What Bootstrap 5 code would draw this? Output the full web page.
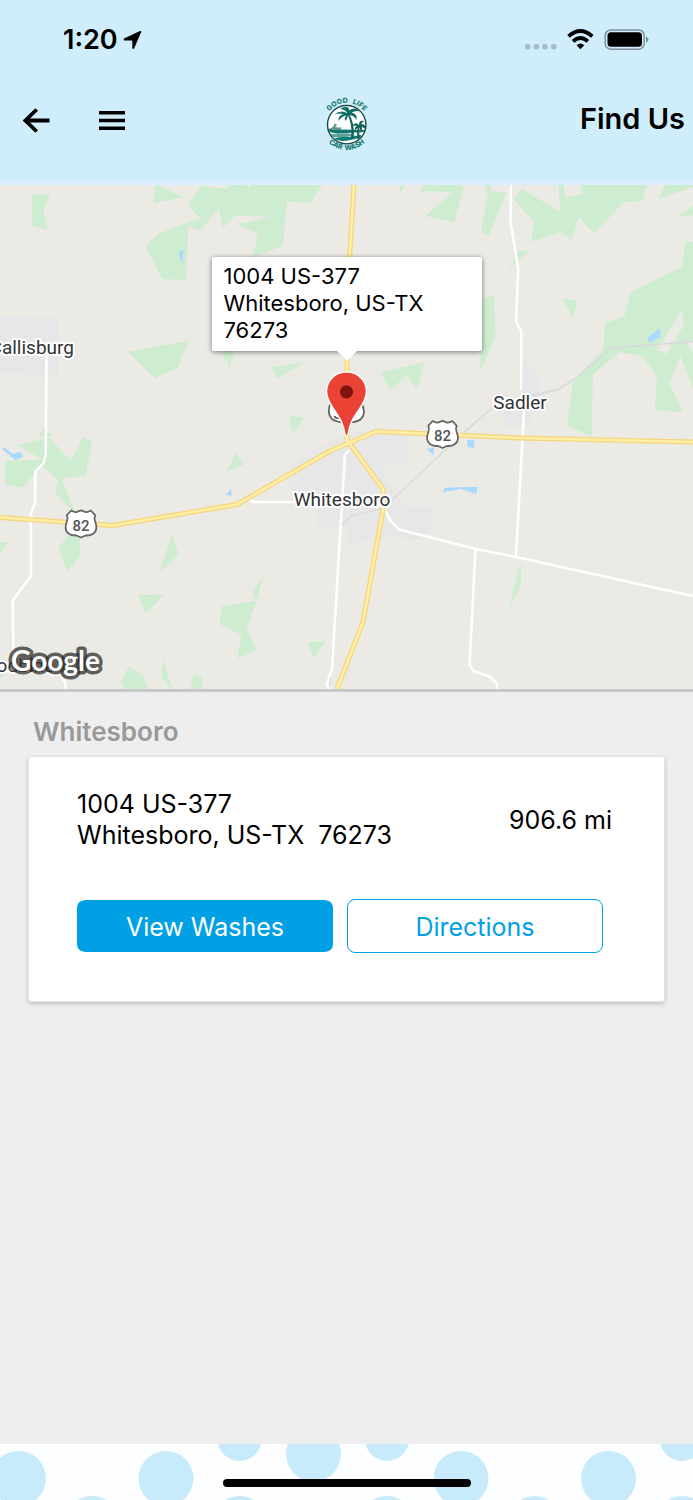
<!DOCTYPE html>
<html lang="en">
<head>
<meta charset="utf-8">
<meta name="viewport" content="width=device-width, initial-scale=1">
<title>Find Us</title>
<link href="https://cdn.jsdelivr.net/npm/bootstrap@5.3.0/dist/css/bootstrap.min.css" rel="stylesheet">
<style>
  body { font-family: Inter, "Liberation Sans", sans-serif; color: #000; background: #eee; }
  .top-area { background: #d0edfb; border-bottom: 5px solid #d8f0fc; }
  .status-bar { height: 80px; padding: 0 44px 0 63px; }
  .clock { font-size: 27px; line-height: 32px; font-weight: 600; }
  .app-bar { height: 100px; padding: 0 8px 0 21px; }
  .icon-btn { color: #000; line-height: 0; }
  .page-title { font-size: 29px; line-height: 36px; font-weight: 600; padding-top: 21px; }
  .map-area { border-bottom: 3px solid #c8c8c8; }
  .map-label { font-family: Roboto, sans-serif; font-size: 19px; fill: #303236; stroke: #fff; stroke-width: 4px; stroke-linejoin: round; paint-order: stroke; }
  .shield-no { font-family: Roboto, sans-serif; font-size: 15px; font-weight: 500; fill: #555; }
  .google-mark { font-family: Lato, sans-serif; font-size: 28px; font-weight: 700; fill: #fff; stroke: #30302c; stroke-opacity: .75; stroke-width: 7px; stroke-linejoin: round; paint-order: stroke; }
  .callout { left: 50%; bottom: 67%; transform: translateX(-50%); width: 270px; padding: 6px 12px 7px; background: #fff; border-radius: 2px; box-shadow: 0 1px 5px rgba(0,0,0,.5); font-size: 22px; line-height: 27px; }
  .callout-tip { left: 50%; top: 100%; width: 20px; height: 10px; transform: translateX(-50%); }
  .places { padding: 24px 28px; }
  .place-name { font-size: 26px; line-height: 32px; font-weight: 600; color: #999; margin: 0 5px 8px; }
  .place-card { border: 1px solid #e4e4e4; border-radius: 3px; padding: 32px 48px 48px; box-shadow: 0 2px 4px rgba(0,0,0,.18); }
  .place-text { font-size: 25px; line-height: 31px; }
  .place-actions { gap: 14px; margin: 48px 13px 0 0; }
  .place-actions .btn { font-size: 25px; line-height: 32px; padding: 11px 10px 9px; border-radius: 8px; border: 1px solid #00a0e4; }
  .place-actions .btn-fill { background: #00a0e4; color: #fff; border-color: #fff; background-clip: padding-box; border-width: 1px 0; }
  .btn-line { background: #fff; color: #00a0e4; }
  .bottom-area { background: #fdfeff; }
  .home-bar { width: 248px; height: 8px; bottom: 13px; left: 50%; transform: translateX(-50%); background: #000; border-radius: 4px; }
</style>
</head>
<body class="d-flex flex-column min-vh-100">
<header class="top-area">
  <div class="status-bar d-flex align-items-center justify-content-between">
    <div class="d-flex align-items-center gap-1">
      <span class="clock">1:20</span>
      <svg width="20" height="18" viewBox="-1 0 20 18" aria-hidden="true"><path d="M18.200 1 11.200 17.300Q10.400 18.500 9.300 17.300V9.500H1.500Q0 8.800 1 7.600L17 .1Q18.700-.3 18.200 1Z"/></svg>
    </div>
    <svg width="125" height="24" viewBox="0 0 125 24" aria-hidden="true">
      <g fill="#a4bcc8"><rect x="1" y="16" width="5.500" height="5.500" rx="2"/><rect x="9.700" y="16" width="5.500" height="5.500" rx="2"/><rect x="18.200" y="16" width="5.500" height="5.500" rx="2"/><rect x="27" y="16" width="5.500" height="5.500" rx="2"/></g>
      <g fill="none" stroke="#000" stroke-width="3.800"><path d="M44.500 8.400Q56.400-2.200 68.300 8.400"/><path d="M49 13.300Q56.400 6.600 63.800 13.300"/></g>
      <path d="M52.600 17.200Q56.400 13.800 60.200 17.200L56.400 21.200Z"/>
      <rect x="81.200" y="2" width="39" height="19.200" rx="5.500" fill="none" stroke="#7f919a" stroke-width="1.500"/>
      <rect x="83.500" y="4.300" width="34.500" height="14.500" rx="3.500"/>
      <path d="M122 8.500Q124.500 9.500 124.500 11.600T122 14.800Z" fill="#7f919a"/>
    </svg>
  </div>
  <nav class="app-bar position-relative d-flex align-items-start justify-content-between" aria-label="Main">
    <div class="d-flex pt-4">
      <button class="btn p-0 border-0 icon-btn me-5" type="button" aria-label="Back">
        <svg width="30" height="32" viewBox="0 0 30 32" fill="none" stroke="#000" stroke-width="3.800"><path d="M15.700 5.500 4.400 16.500 15.700 27.500M4.500 16.500H28.500"/></svg>
      </button>
      <button class="btn p-0 border-0 icon-btn" type="button" aria-label="Menu">
        <svg width="26" height="32" viewBox="0 0 26 32"><path d="M0 7h26v3.600H0zM0 14.700h26v3.600H0zM0 22.500h26v3.600H0z"/></svg>
      </button>
    </div>
    <svg class="position-absolute top-0 start-50 translate-middle-x" width="66" height="90" viewBox="314 80 66 90" role="img" aria-label="Good Life Car Wash">
      <defs>
        <path id="arcTop" d="M327.600 135.700A22 22 0 1 1 365.800 135.700"/>
        <path id="arcBottom" d="M320.700 124A26 26 0 0 0 372.700 124"/>
        <clipPath id="disc"><circle cx="346.700" cy="124.700" r="18.500"/></clipPath>
      </defs>
      <circle cx="346.700" cy="124.700" r="19.200" fill="#fff" stroke="#194c45" stroke-width="1.400"/>
      <g clip-path="url(#disc)">
        <path d="M326 129.500Q333 127 340 129.500L366 130V132L338 133.500 328 132Z" fill="#15766f"/>
        <path d="M329 134 347 133.200 356 135Q346 138 333 137Z" fill="#5fa49c"/>
        <path d="M333 139Q341 136 349 137L361 135V137Q350 141 342 141Z" fill="#0c8077"/>
        <path d="M331 128.500 334 125.500 337 127.500H342L340 130H331ZM334 124h2.500v2H334Z" fill="#62958e"/>
        <path d="M346.500 113Q353 123 351 138L353.500 139Q355.500 123 348 112.500ZM358 125Q356.500 133 357.500 139H360Q358.500 132 359.500 125Z" fill="#12625b"/>
        <path d="M347.500 113.500Q341 109 334.500 114.500Q340 113 343 114Q338 116 338.500 121Q342 116 346 115.500Q344 118 345 121Q347.500 119 348 115Q354 115 356.500 120Q358 114 351.500 112.500Q356 110 360 111.500Q355 106 349 110.500Q350 107 345.500 107Q342 107 340 109Q345 109 347.500 113.500Z" fill="#0b6e66"/>
        <path d="M359 125Q355 121 352.500 126L357 125.500Q354 128 355 130L359 127 361 131Q363 129 361.500 126.500L365.500 129Q366 124 361 124L364 121Q359 120 359 125Z" fill="#12625b"/>
      </g>
      <g font-family="Inter, sans-serif" font-weight="800" font-size="7" fill="#177a72">
        <text><textPath href="#arcTop" startOffset="50%" text-anchor="middle">GOOD&#160;&#160;&#160;LIFE</textPath></text>
        <text><textPath href="#arcBottom" startOffset="50%" text-anchor="middle">CAR&#160;&#160;WASH</textPath></text>
      </g>
    </svg>
    <h1 class="page-title m-0">Find Us</h1>
  </nav>
</header>

<section class="map-area position-relative" aria-label="Map">
  <svg class="d-block w-100" viewBox="0 185 693 504">
    <defs>
      <path id="shield" d="M-9.800-13.500Q-6-11-3.500-12.300L0-13.700 3.500-12.300Q6-11 9.800-13.500L14.300-8.700Q12.700-6 14-3Q17.500 6 12.500 9.500Q9.500 11.700 4.500 11.500L0 13.500-4.500 11.500Q-9.500 11.700-12.500 9.500Q-17.500 6-14-3Q-12.700-6-14.300-8.700Z" fill="#fff" stroke="#666" stroke-width="1.800" stroke-linejoin="round"/>
    </defs>
    <rect y="185" width="693" height="504" fill="#ebeae4"/>
    <!-- built-up areas -->
    <g fill="#e7e7e7">
      <path d="M0 316 58 318V376L0 373ZM523 360Q540 368 540 390L528 427H503V402L520 398Z"/>
      <path d="M347 432H408V465H385V480L404 506 432 507V528L415 541 385 535 348 545 346 527H317V500L289 489V465L317 450Z"/>
    </g>
    <!-- woodland, north-west -->
    <g fill="#ceedd0" transform="translate(0 180) scale(.33333)">
      <path d="M96 42 150 44 131 92 143 151 96 138ZM466 10 552 52 461 70ZM603 17 680 28 690 10H740L745 25 757 10H970L930 70 861 64 849 198 760 230 774 163 712 133 810 110 706 106 668 144 656 88 600 152 565 138 558 300 487 297 437 199 478 160 600 114 565 76ZM385 515 565 482 533 563 465 595ZM663 510H704L689 563ZM815 561 910 548 830 598ZM868 705 914 714 876 764Z"/>
      <path d="M536 218 550 208 548 245 543 245Z" fill="#a9d9ff"/>
    </g>
    <!-- woodland, north-east -->
    <g fill="#ceedd0" transform="translate(343 180) scale(.33333)">
      <path d="M171 10H190L171 38ZM245 10H348L362 28 334 126 247 108 328 36 232 34ZM425 10H441L447 34 490 37 437 169 413 155 435 43ZM538 27 653 97 645 10H661L668 53 718 43 716 10H914L900 63 843 67 753 160 707 111 685 181 653 156 564 185 573 126 511 57ZM970 10H1050V22L945 56ZM1000 110 1050 78V106ZM528 212H562L498 265ZM415 358 454 346 457 468 411 576ZM657 355 702 360 691 416ZM113 577 244 546 222 630 191 586 141 632Z"/>
      <path fill-rule="evenodd" d="M1028 183 1050 187V625L1012 528 978 612 1021 697 935 690 942 588 897 529 830 517 750 583 746 770 672 736 690 606 779 510 787 430 844 410 863 337 1016 261ZM1017 388 1023 435 970 522 944 511ZM1024 484 1050 483V515Z"/>
      <path d="M912 474 950 445 952 472 920 488Z" fill="#a9d9ff"/>
      <path d="M365 756 450 682M568 646 645 629 705 590 805 504 1050 485" fill="none" stroke="#d8dadb" stroke-width="5"/>
    </g>
    <!-- woodland, south-west -->
    <g fill="#ceedd0" transform="translate(0 430) scale(.33333)">
      <path d="M53 45 148 23 211 92 251 20 277 38 256 136 186 146 224 248 166 188 174 150 125 108 68 172 15 164V92L128 89ZM115 20 130-5 160 20ZM205 318 239 320 240 377 202 426 175 352ZM0 336H26L0 373ZM709 65 732 105 680 123ZM517 311 536 373 478 428ZM415 495H491L436 551ZM791 438 770 510 740 598 769 661 712 685 724 615 659 583 665 528 767 513 758 483ZM923 638 976 632 942 686ZM386 711 428 736 442 776H374L362 757ZM490 688 516 776 484 740ZM580 734 607 738V776H571ZM0 731H25L0 742Z"/>
      <path d="M6 56 14 52 38 72 60 66 70 80 46 91ZM677 195 693 177 695 198Z" fill="#a9d9ff"/>
    </g>
    <!-- ponds and railway, south-east -->
    <g transform="translate(343 430) scale(.33333)">
      <path d="M533 394 535 464 497 535Z" fill="#ceedd0"/>
      <path d="M250 56 273 54V76ZM372 30H394V54L374 51ZM298 187 305 174 352 171 404 171 400 192 352 177Z" fill="#a9d9ff"/>
      <path d="M365 6 145 212M115 237 25 257-5 285-40 770" fill="none" stroke="#d8dadb" stroke-width="4"/>
    </g>
    <!-- minor roads -->
    <g fill="none" stroke="#fff" stroke-width="2.500" stroke-linejoin="round">
      <path d="M46.600 355 45.700 455 43.500 463 35.300 471.500 35 503 31 513.500V576L12.700 600.500 13.500 668M48 674 60 675.500 65 682 66 689M248 496 253 502H296M349 450 345 455 332 668 327 684 329 689"/>
      <path d="M511 185 510.500 222 518.300 269 516 321 521.300 332 521 390M524 411 516 556M384 509 391 521 399 529.500 476 549 516 557 693 596M475.500 549 469.500 664.500 473.500 671 491 677 497 684V689"/>
    </g>
    <!-- highways -->
    <g fill="none" stroke="#f7d479" stroke-width="5" stroke-linejoin="round"><path d="M0 517.500 113 525.500 237 504.500 330 451 376 431.500 520 438 693 442M354 185 347 300V440L383 489 384 504 363 622 337 689"/></g>
    <g fill="none" stroke="#fff0a9" stroke-width="2.500" stroke-linejoin="round"><path d="M0 517.500 113 525.500 237 504.500 330 451 376 431.500 520 438 693 442M354 185 347 300V440L383 489 384 504 363 622 337 689"/></g>
    <!-- route shields -->
    <g class="shield-no" text-anchor="middle">
      <use href="#shield" x="81" y="524"/><text x="81" y="531">82</text>
      <use href="#shield" x="442.500" y="434.500"/><text x="442.500" y="441">82</text>
      <path d="M331 402Q326 413 332 419Q336 422 346 423Q358 422 361 419Q367 413 361 402Z" fill="#fff" stroke="#666" stroke-width="1.800"/><text x="346" y="419">377</text>
    </g>
    <g class="map-label">
      <text x="74" y="354" text-anchor="end">Callisburg</text>
      <text x="520" y="409" text-anchor="middle">Sadler</text>
      <text x="342" y="506" text-anchor="middle">Whitesboro</text>
      <text x="54" y="672" text-anchor="end">Woodbine</text>
    </g>
    <text class="google-mark" x="11" y="671">Google</text>
    <!-- pin -->
    <path d="M346.500 372C335 372 326.500 380.500 326.500 391.500C326.500 399 330.500 404.500 334.500 410.500C340 418.500 343.500 424 345 434.500Q346.500 438 348 434.500C349.500 424 353 418.500 358.500 410.500C362.500 404.500 366.500 399 366.500 391.500C366.500 380.500 358 372 346.500 372Z" fill="#ea4335" stroke="#fff" stroke-width="1.500"/>
    <circle cx="346.500" cy="391.800" r="6.600" fill="#811411"/>
  </svg>
  <div class="callout position-absolute">1004 US-377<br>Whitesboro, US-TX 76273
    <svg class="callout-tip position-absolute" viewBox="0 0 20 10" aria-hidden="true"><path d="M0 0h20L10 10Z" fill="#fff"/></svg>
  </div>
</section>

<main class="places flex-grow-1">
  <h2 class="place-name">Whitesboro</h2>
  <article class="card place-card">
    <div class="d-flex justify-content-between align-items-center place-text">
      <address class="m-0 place-text">1004 US-377<br>Whitesboro, US-TX&nbsp; 76273</address>
      <span class="me-1">906.6 mi</span>
    </div>
    <div class="place-actions d-flex">
      <button class="btn btn-fill flex-fill w-50" type="button">View Washes</button>
      <button class="btn btn-line flex-fill w-50" type="button">Directions</button>
    </div>
  </article>
</main>

<footer class="bottom-area position-relative">
  <svg class="d-block w-100" viewBox="0 1444 693 56" aria-hidden="true">
    <g fill="#c7ebfb">
      <circle cx="18.500" cy="1478.500" r="27.500"/><circle cx="166" cy="1478.500" r="27.500"/><circle cx="313.500" cy="1454" r="27.500"/><circle cx="461" cy="1478.500" r="27.500"/><circle cx="608.500" cy="1478.500" r="27.500"/>
      <circle cx="239.500" cy="1439" r="22"/><circle cx="387" cy="1439" r="22"/><circle cx="682" cy="1439" r="22"/>
      <circle cx="92" cy="1523.500" r="27.500"/><circle cx="239.500" cy="1523.500" r="27.500"/><circle cx="387" cy="1523.500" r="27.500"/><circle cx="534.500" cy="1523.500" r="27.500"/><circle cx="682" cy="1523.500" r="27.500"/>
    </g>
  </svg>
  <div class="home-bar position-absolute"></div>
</footer>
<script src="https://cdn.jsdelivr.net/npm/bootstrap@5.3.0/dist/js/bootstrap.bundle.min.js"></script>
</body>
</html>
